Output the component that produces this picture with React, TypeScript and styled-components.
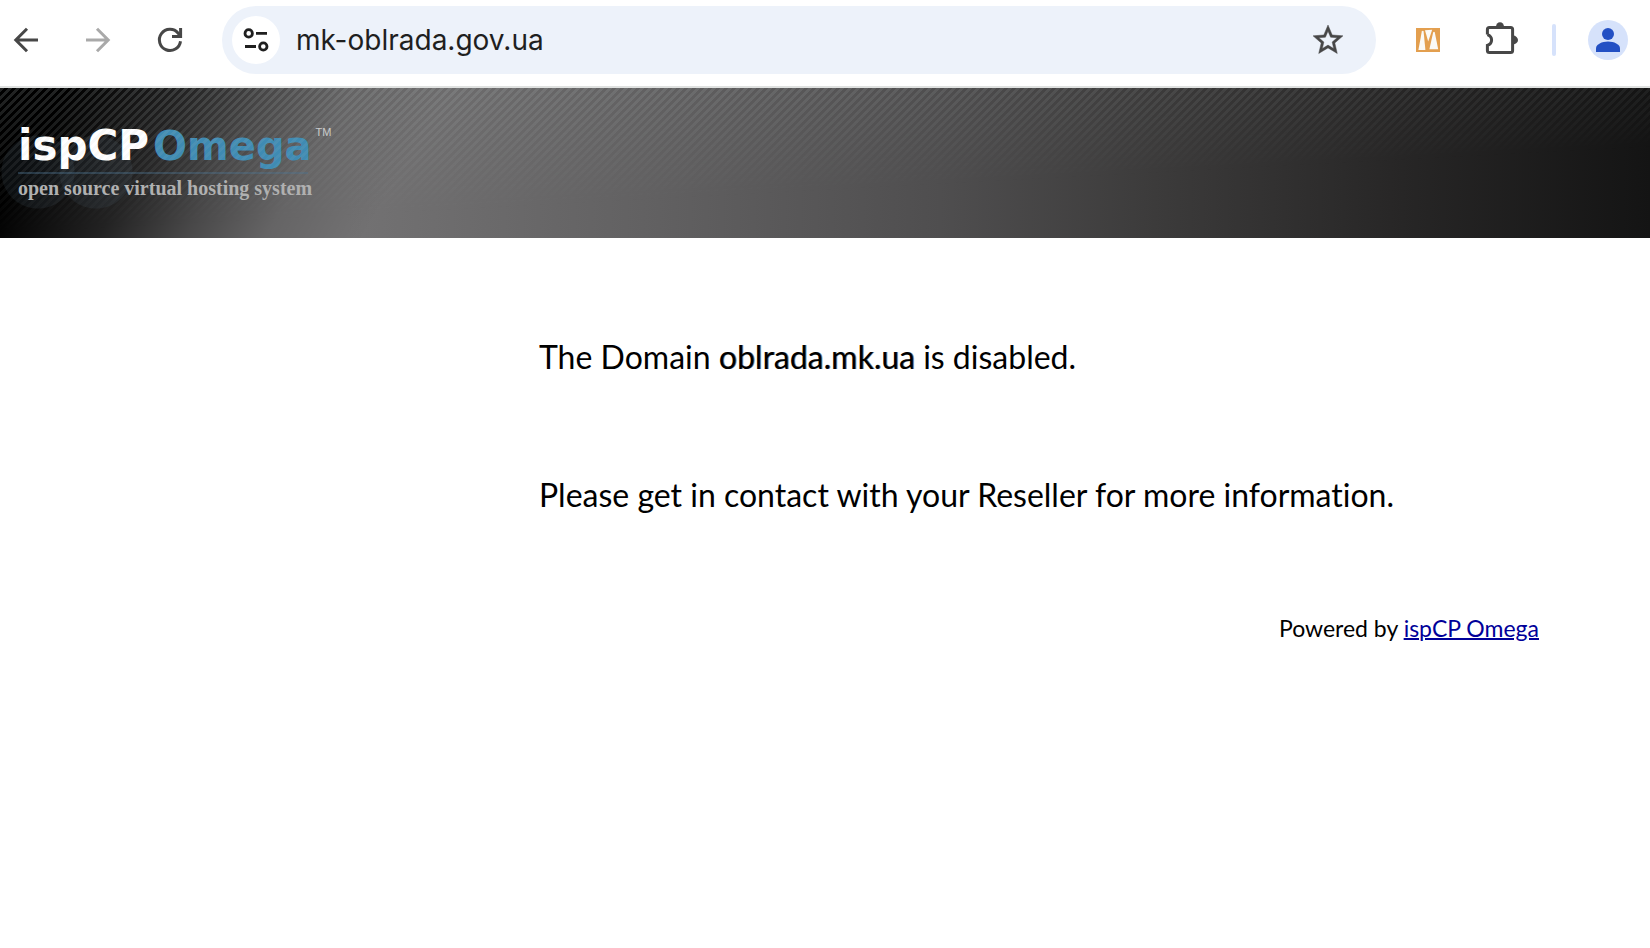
import React from "react";
import styled, { createGlobalStyle } from "styled-components";

const GlobalStyle = createGlobalStyle`
  * { box-sizing: border-box; }
  body {
    margin: 0;
    background: #fff;
    color: #000;
    font-family: Lato, "Liberation Sans", sans-serif;
    font-variant-ligatures: none;
  }
`;

const Toolbar = styled.nav`
  display: flex;
  align-items: center;
  gap: 24px;
  padding: 6px 22px 12px 2px;
  border-bottom: 2px solid #dfe1e0;
`;

const IconButton = styled.button<{ $color?: string }>`
  display: flex;
  align-items: center;
  justify-content: center;
  flex: none;
  width: 48px;
  height: 48px;
  padding: 0;
  border: 0;
  border-radius: 50%;
  background: transparent;
  color: ${(p) => p.$color ?? "#474747"};
`;

const SiteInfoButton = styled(IconButton)`
  background: #fff;
  color: #1f1f1f;
`;

const AvatarButton = styled(IconButton)`
  width: 40px;
  height: 40px;
  background: #d6e2fb;
  color: #2350c4;
`;

const AddressBar = styled.form`
  display: flex;
  align-items: center;
  gap: 16px;
  flex: 1;
  min-width: 0;
  height: 68px;
  margin: 0 4px;
  padding: 0 24px 0 10px;
  border-radius: 34px;
  background: #edf2fa;
`;

const AddressInput = styled.input`
  flex: 1;
  min-width: 0;
  height: 40px;
  padding: 0;
  border: 0;
  outline: 0;
  background: transparent;
  color: #1f1f1f;
  font-family: Inter, Roboto, sans-serif;
  font-size: 28px;
`;

const Divider = styled.span`
  flex: none;
  width: 4px;
  height: 32px;
  margin: 0 8px 0 4px;
  border-radius: 2px;
  background: #d6e2fb;
`;

const Banner = styled.header`
  display: grid;
  min-height: 150px;
  background:
    radial-gradient(circle at 38px 84px, rgba(90, 115, 135, 0.12) 36px, transparent 37px),
    radial-gradient(circle at 96px 84px, rgba(90, 115, 135, 0.12) 36px, transparent 37px),
    linear-gradient(
      120deg,
      #000 60px,
      rgba(0, 0, 0, 0.7) 160px,
      rgba(0, 0, 0, 0.37) 235px,
      rgba(0, 0, 0, 0.12) 305px,
      transparent 390px
    ),
    linear-gradient(
      90deg,
      #737273 21%,
      #626162 39%,
      #4f4e4f 57%,
      #3c3b3b 70%,
      #272626 85%,
      #141414
    );
`;

/* Diagonal hatch that fades out towards the bottom right. */
const Hatch = styled.div`
  grid-area: 1 / 1;
  background: linear-gradient(
      135deg,
      rgba(190, 200, 200, 0.18) 25%,
      transparent 25%,
      transparent 50%,
      rgba(190, 200, 200, 0.18) 50%,
      rgba(190, 200, 200, 0.18) 75%,
      transparent 75%
    )
    0 0 / 8px 8px;
  mask-image: linear-gradient(177deg, #000, transparent 62%);
`;

const Logo = styled.div`
  grid-area: 1 / 1;
  display: flex;
  flex-direction: column;
  align-items: flex-start;
  padding: 38px 0 0 18px;
`;

const Wordmark = styled.div`
  display: flex;
  gap: 4px;
  color: #fff;
  font: bold 42px/40px "DejaVu Sans", sans-serif;
`;

const Accent = styled.span`
  color: #3f8bb3;
  font-size: 40px;
`;

const Trademark = styled.span`
  color: #ccc;
  font: 11px/12px "Liberation Sans", sans-serif;
`;

const Rule = styled.hr`
  width: 290px;
  height: 2px;
  margin: 6px 0 2px;
  border: 0;
  background: rgba(75, 115, 145, 0.4);
`;

const Tagline = styled.p`
  margin: 0;
  color: #b0b0b0;
  font: bold 20px/24px "Liberation Serif", serif;
`;

const Content = styled.main`
  display: flex;
  flex-direction: column;
  gap: 98px;
  max-width: 1000px;
  margin: 0 111px 0 auto;
  padding: 99px 0;
`;

const Message = styled.p`
  margin: 0;
  font-size: 32px;
  line-height: 40px;
`;

const DomainName = styled.strong`
  font-weight: inherit;
  text-shadow: 1px 0 rgba(0, 0, 0, 0.5);
`;

const PoweredBy = styled.footer`
  font-size: 23px;
  line-height: 30px;
  text-align: right;
`;

const ProductLink = styled.a`
  color: #000099;
  text-decoration-thickness: 2px;
`;

const BackIcon = () => (
  <svg width="48" height="48" viewBox="0 0 48 48" fill="none" stroke="currentColor" strokeWidth="3">
    <path d="M36 24H14M25 12.8L13.8 24L25 35.2" />
  </svg>
);

const ForwardIcon = () => (
  <svg width="48" height="48" viewBox="0 0 48 48" fill="none" stroke="currentColor" strokeWidth="3">
    <path d="M12 24H34M23 12.8L34.2 24L23 35.2" />
  </svg>
);

const ReloadIcon = () => (
  <svg width="48" height="48" viewBox="0 0 48 48" fill="none" stroke="currentColor" strokeWidth="3">
    <path d="M34.5 25.2A10.6 10.6 0 1 1 32.2 17.2L34 19.5" />
    <path d="M34.6 12V20.5H26" />
  </svg>
);

const TuneIcon = () => (
  <svg width="48" height="48" viewBox="0 0 48 48" fill="none" stroke="currentColor" strokeWidth="2.8">
    <circle cx="16.7" cy="17.4" r="3.7" />
    <circle cx="31.3" cy="30.5" r="3.7" />
    <path d="M24 17.4H35M13 30.5H24" />
  </svg>
);

const StarIcon = () => (
  <svg width="36" height="36" viewBox="0 0 24 24" fill="currentColor" stroke="currentColor" strokeWidth="0.3">
    <path d="M22 9.24l-7.19-.62L12 2 9.19 8.63 2 9.24l5.46 4.73L5.82 21 12 17.27 18.18 21l-1.63-7.03L22 9.24zM12 15.4l-3.76 2.27 1-4.28-3.32-2.88 4.38-.38L12 6.1l1.71 4.04 4.38.38-3.32 2.88 1 4.28L12 15.4z" />
  </svg>
);

const PanelsIcon = () => (
  <svg width="24" height="24" viewBox="0 0 24 24">
    <rect width="24" height="24" fill="#e39f4f" />
    <g fill="#fbfaf7">
      <path d="M2.4 22L5.8 3.4Q7 2 7.6 3.6L9.4 22Z" />
      <path d="M9 2.2L16.2 1.8L12.2 13.5Z" />
      <path d="M13.4 21.2L17.2 4.2Q18.2 3 18.8 4.6L22.2 21.2Z" />
    </g>
  </svg>
);

const PuzzleIcon = () => (
  <svg width="48" height="48" viewBox="0 0 48 48" fill="none" stroke="currentColor" strokeWidth="3">
    <path d="M11.4 18.6V13.4a2 2 0 0 1 2-2H34.6a2 2 0 0 1 2 2V34.6a2 2 0 0 1-2 2H13.4a2 2 0 0 1-2-2V29.4C17 27.4 17 20.6 11.4 18.6" />
    <g fill="currentColor" stroke="none">
      <path d="M20 11a4 4.8 0 0 1 8 0Z" />
      <path d="M37 19.6a5 4.4 0 0 1 0 8.8Z" />
    </g>
  </svg>
);

const PersonIcon = () => (
  <svg width="40" height="40" viewBox="0 0 40 40" fill="currentColor">
    <circle cx="20" cy="14" r="6" />
    <path d="M8 32V28.4C8 24.4 14 21.6 20 21.6S32 24.4 32 28.4V32Z" />
  </svg>
);

export default function App() {
  return (
    <>
      <GlobalStyle />
      <Toolbar aria-label="Browser">
        <IconButton aria-label="Back"><BackIcon /></IconButton>
        <IconButton aria-label="Forward" $color="#a9a9a9"><ForwardIcon /></IconButton>
        <IconButton aria-label="Reload"><ReloadIcon /></IconButton>
        <AddressBar onSubmit={(e) => e.preventDefault()}>
          <SiteInfoButton type="button" aria-label="Site information"><TuneIcon /></SiteInfoButton>
          <AddressInput aria-label="Address" defaultValue="mk-oblrada.gov.ua" spellCheck={false} />
          <IconButton type="button" aria-label="Bookmark"><StarIcon /></IconButton>
        </AddressBar>
        <IconButton aria-label="Panels extension"><PanelsIcon /></IconButton>
        <IconButton aria-label="Extensions"><PuzzleIcon /></IconButton>
        <Divider />
        <AvatarButton aria-label="Profile"><PersonIcon /></AvatarButton>
      </Toolbar>
      <Banner>
        <Hatch />
        <Logo>
          <Wordmark>
            <span>ispCP</span>
            <Accent>Omega</Accent>
            <Trademark>TM</Trademark>
          </Wordmark>
          <Rule />
          <Tagline>open source virtual hosting system</Tagline>
        </Logo>
      </Banner>
      <Content>
        <Message>The Domain <DomainName>oblrada.mk.ua</DomainName> is disabled.</Message>
        <Message>Please get in contact with your Reseller for more information.</Message>
        <PoweredBy>Powered by <ProductLink href="#omega">ispCP Omega</ProductLink></PoweredBy>
      </Content>
    </>
  );
}
